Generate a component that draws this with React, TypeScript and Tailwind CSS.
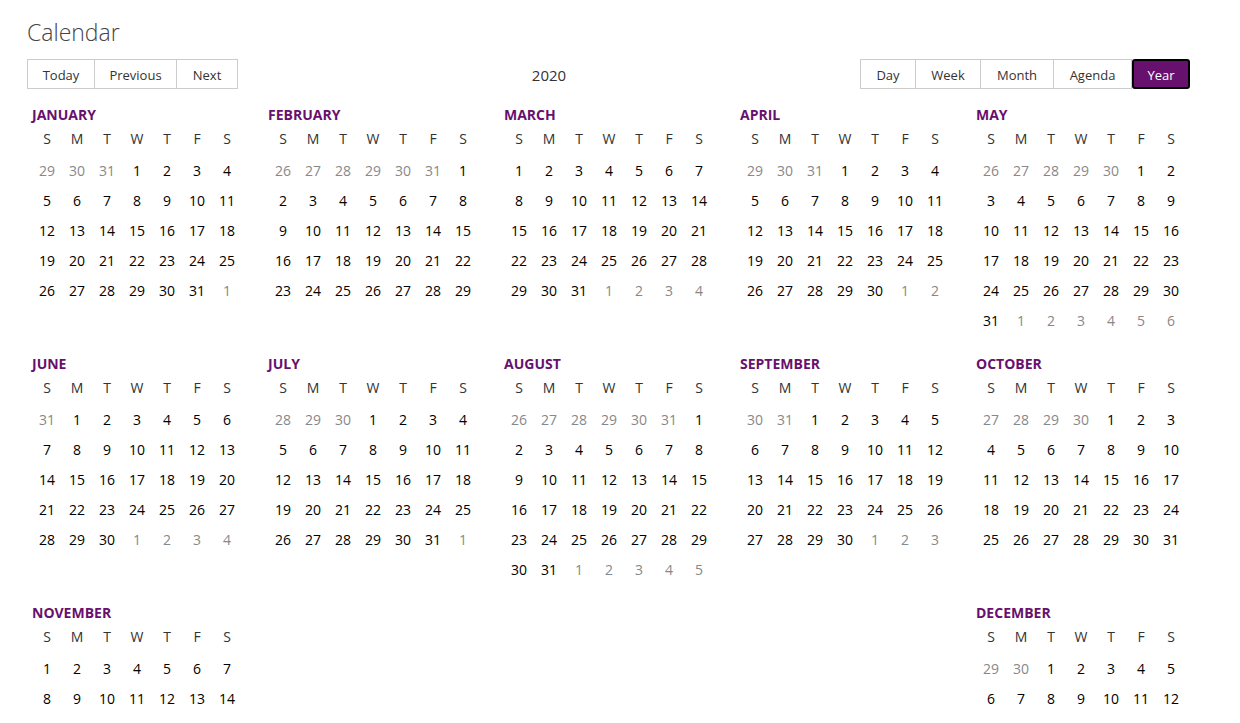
import React from 'react';

const MONTHS = [
  'January', 'February', 'March', 'April', 'May', 'June',
  'July', 'August', 'September', 'October', 'November', 'December',
];
const WEEKDAYS = ['S', 'M', 'T', 'W', 'T', 'F', 'S'];
const YEAR = 2020;

type Cell = { day: number; current: boolean };

// builds Sunday-first weeks for a month, padded with neighbouring days
function buildWeeks(year: number, month: number): Cell[][] {
  const first = new Date(year, month, 1).getDay();
  const daysIn = new Date(year, month + 1, 0).getDate();
  const prevDays = new Date(year, month, 0).getDate();
  const cells: Cell[] = [];
  for (let i = first - 1; i >= 0; i--) cells.push({ day: prevDays - i, current: false });
  for (let d = 1; d <= daysIn; d++) cells.push({ day: d, current: true });
  let next = 1;
  while (cells.length % 7 !== 0) cells.push({ day: next++, current: false });
  const weeks: Cell[][] = [];
  for (let i = 0; i < cells.length; i += 7) weeks.push(cells.slice(i, i + 7));
  return weeks;
}

function MonthBlock({ month }: { month: number }) {
  const weeks = buildWeeks(YEAR, month);
  return (
    <div className="w-[210px] mb-[19px]">
      <div className="h-5 leading-5 text-[14px] font-bold uppercase text-[#68106e]">{MONTHS[month]}</div>
      <div className="grid grid-cols-7 h-[27px] items-center text-[14px] text-[#333]">
        {WEEKDAYS.map((w, i) => (
          <div key={i} className="text-center">{w}</div>
        ))}
      </div>
      <div className="mt-[3px]">
        {weeks.map((week, wi) => (
          <div key={wi} className="grid grid-cols-7 h-[30px] items-center text-[14px]">
            {week.map((c, ci) => (
              <div key={ci} className={c.current ? 'text-center text-black' : 'text-center text-[#888]'}>
                {c.day}
              </div>
            ))}
          </div>
        ))}
      </div>
    </div>
  );
}

const navButtons = [
  { label: 'Today', w: 'w-[68px]' },
  { label: 'Previous', w: 'w-[82px]' },
  { label: 'Next', w: 'w-[61px]' },
];

const viewButtons = [
  { label: 'Day', w: 'w-[56px]' },
  { label: 'Week', w: 'w-[65px]' },
  { label: 'Month', w: 'w-[73px]' },
  { label: 'Agenda', w: 'w-[78px]' },
];

export default function App() {
  return (
    <div
      className="min-h-screen bg-white pl-[27px] pr-[50px] pt-[16px]"
      style={{ fontFamily: '"Open Sans", "Noto Sans", sans-serif' }}
    >
      <h1 className="text-[23px] leading-8 font-light text-[#444]">Calendar</h1>

      <div className="mt-[11px] flex items-center h-[30px]">
        <div className="flex h-full">
          {navButtons.map((b, i) => (
            <button
              key={b.label}
              className={`${b.w} h-full pt-[3px] border border-[#ccc] ${i > 0 ? 'border-l-0' : ''} text-[13px] text-[#333] bg-white`}
            >
              {b.label}
            </button>
          ))}
        </div>
        <div className="flex-1 pt-[3px] text-center text-[15px] text-[#333]">{YEAR}</div>
        <div className="flex h-full">
          {viewButtons.map((b, i) => (
            <button
              key={b.label}
              className={`${b.w} h-full pt-[3px] border border-[#ccc] ${i > 0 ? 'border-l-0' : ''} text-[13px] text-[#333] bg-white`}
            >
              {b.label}
            </button>
          ))}
          <button className="w-[58px] h-full pt-[3px] rounded-[3px] border-2 border-black bg-[#68106e] text-[13px] text-white">
            Year
          </button>
        </div>
      </div>

      <div className="mt-[16px] ml-[5px] mr-[4px] flex flex-wrap justify-between items-start">
        {MONTHS.map((_, m) => (
          <MonthBlock key={m} month={m} />
        ))}
      </div>
    </div>
  );
}
